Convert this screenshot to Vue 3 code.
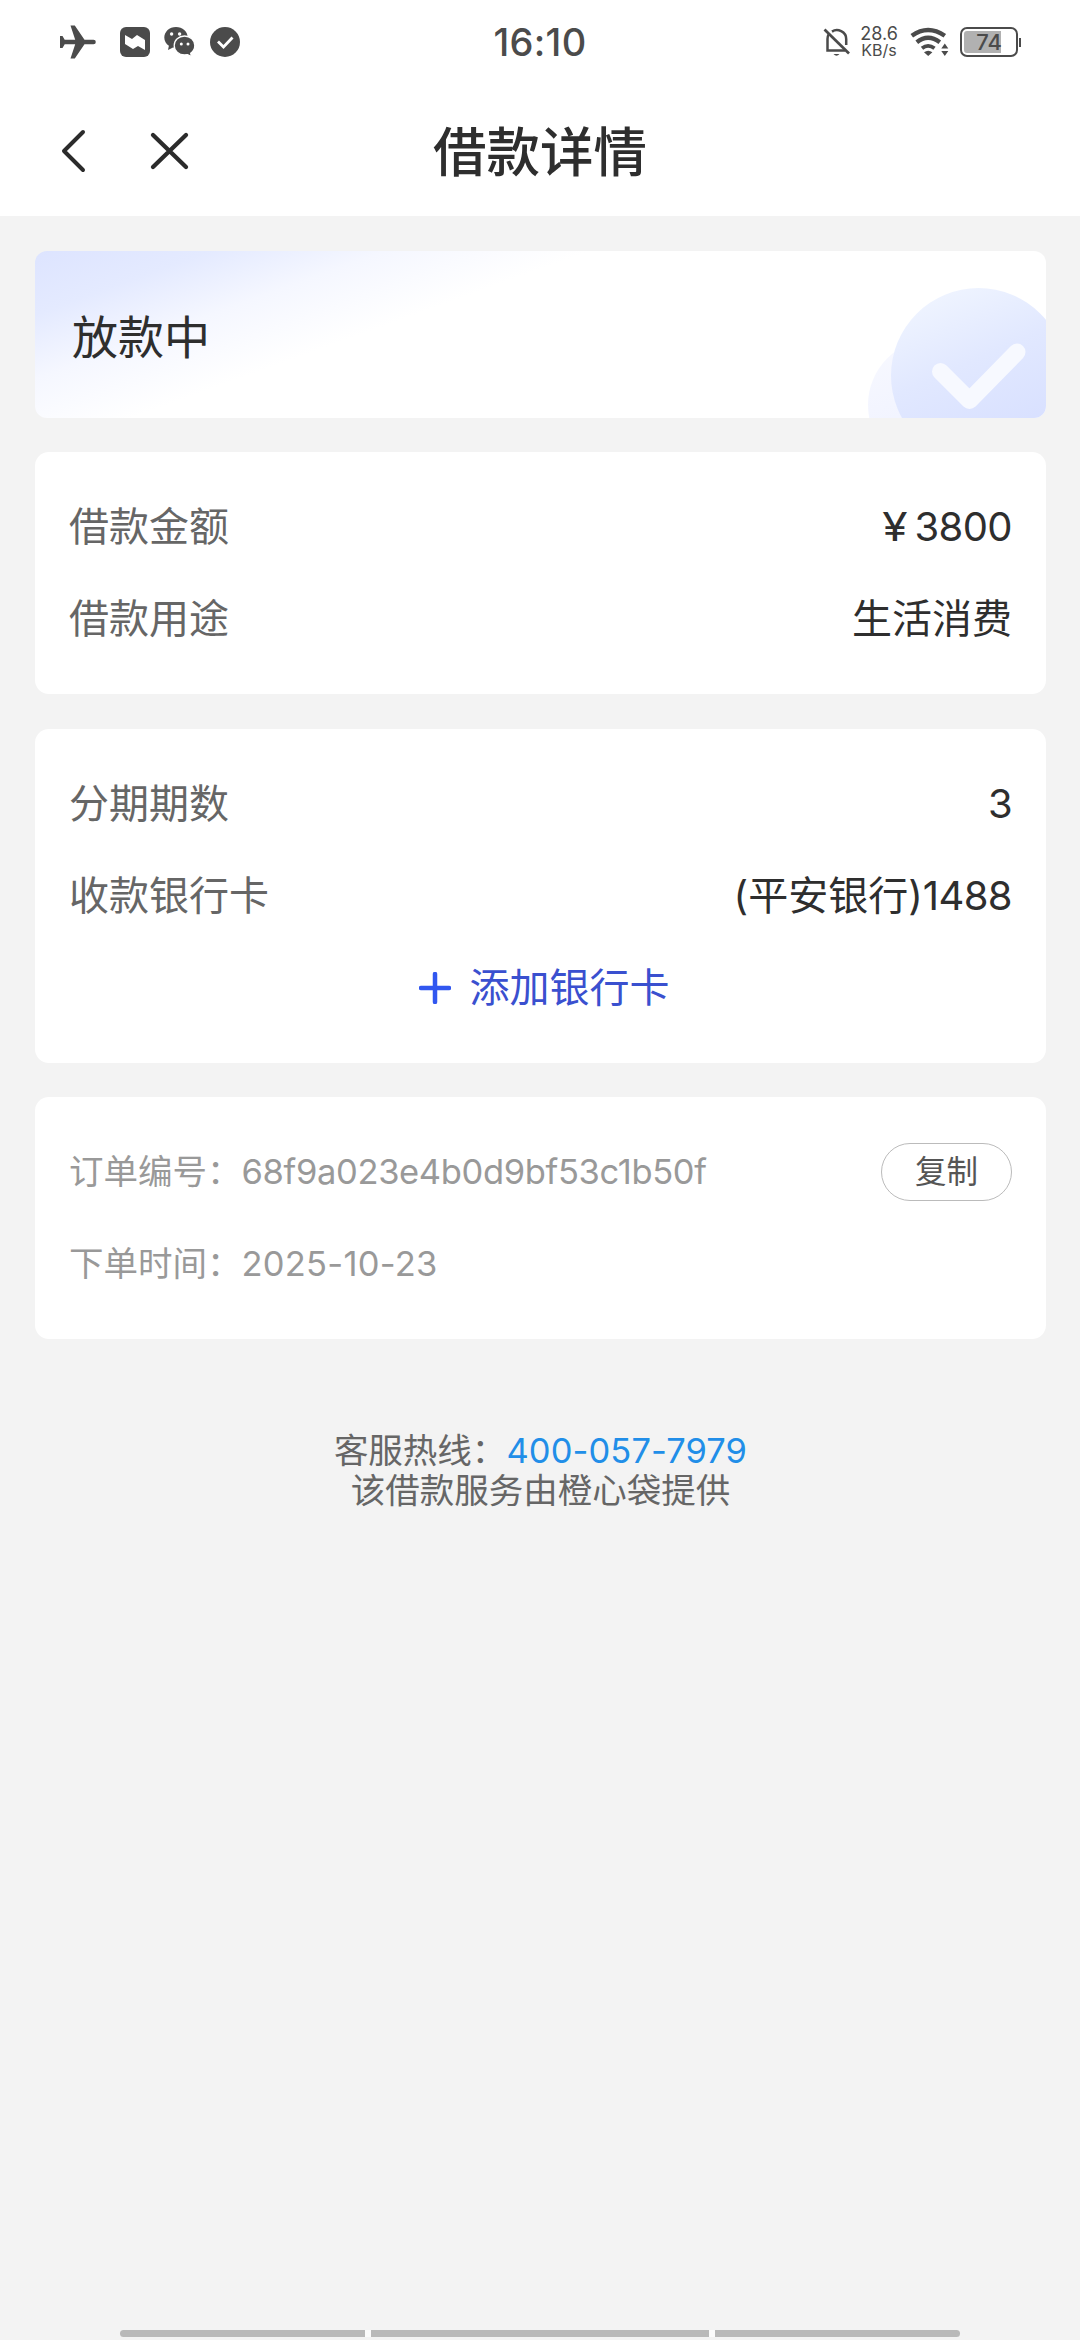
<script setup>
const loan = [
  { label: '借款金额', value: '3800', yen: true },
  { label: '借款用途', value: '生活消费' },
]
const plan = [
  { label: '分期期数', value: '3' },
  { label: '收款银行卡', bank: '(平安银行)', value: '1488' },
]
</script>

<template>
  <div class="page">
    <header class="top">
      <div class="status">
        <div class="status-left">
          <svg class="plane" width="38" height="36" viewBox="0 0 38 36">
            <path d="M1 12h2.500l2.200 3.700h10.500L11.500 1.500h4.300L25.500 15.700H34.500a2.300 2.300 0 0 1 0 4.600H25.500L15.800 34.500h-4.300l4.700-14.200H5.700L3.500 24H1z" fill="#4b4b4b" />
          </svg>
          <svg class="app" width="30" height="30" viewBox="0 0 30 30">
            <rect width="30" height="30" rx="6" fill="#4b4b4b" />
            <path d="M5 8l7 4 5-4 8 5v10l-7-4-5 3-8-5z" fill="#fff" />
          </svg>
          <svg class="wechat" width="32" height="30" viewBox="0 0 32 30">
            <path d="M12 0C5.300 0 .3 4.700.3 10.500c0 3.500 1.800 6.300 4.600 8.300L4 23l5-2.500 3 .5c6.500 0 11.700-4.500 11.700-10.500S18.500 0 12 0z" fill="#4b4b4b" />
            <circle cx="7.600" cy="7" r="1.700" fill="#fff" /><circle cx="15.600" cy="7" r="1.700" fill="#fff" />
            <path d="M20.500 9C14.700 9 10.200 13 10.200 18.500S14.700 28 20.500 28l3-.4 4 2.100-.8-3.500c2.500-1.800 4.100-4.500 4.100-7.700C30.800 13 26.300 9 20.500 9z" fill="#4b4b4b" stroke="#fff" stroke-width="1.300" />
            <circle cx="17.300" cy="17" r="1.500" fill="#fff" /><circle cx="24" cy="17" r="1.500" fill="#fff" />
          </svg>
          <svg class="done" width="30" height="30" viewBox="0 0 30 30">
            <circle cx="15" cy="15" r="15" fill="#4b4b4b" />
            <path d="M8 14.500l5.500 5.500L22.500 10.500" fill="none" stroke="#fff" stroke-width="2.800" />
          </svg>
        </div>
        <div class="clock">16:10</div>
        <div class="status-right">
          <svg width="28" height="30" viewBox="0 0 28 30" fill="none" stroke="#4b4b4b">
            <path d="M5.500 7.500Q4.500 9.500 4.500 12v11.500H22" stroke-width="2.500" />
            <path d="M9 4.600C14.500 1 23.200 4.600 23.200 12v6" stroke-width="2.500" />
            <path d="M1.500 2.500l24.500 24" stroke-width="2.700" />
            <path d="M10.500 27h6q-3 3.500-6 0z" fill="#4b4b4b" stroke="none" />
          </svg>
          <div class="speed"><span>28.6</span><span class="unit">KB/s</span></div>
          <svg class="wifi" width="40" height="30" viewBox="0 0 40 30">
            <g fill="none" stroke="#4b4b4b" stroke-width="4.400">
              <path d="M1.800 8.800Q18 -2.800 34.800 8.800" />
              <path d="M6.800 15.200Q18 6.300 29.800 15.200" />
              <path d="M12 21.300Q18 16.500 24.500 21.300" stroke-width="3.800" />
            </g>
            <path d="M14 25.200q4.200-3 8.400 0L18.200 29z" fill="#4b4b4b" />
            <path d="M31.300 21.500h7L34.800 16.500zM31.300 24h7L34.800 29z" fill="#4b4b4b" />
          </svg>
          <div class="battery"><div class="cell"><div class="charge"></div><span>74</span></div><i></i></div>
        </div>
      </div>
      <div class="nav">
        <svg width="130" height="44" viewBox="0 0 130 44" fill="none" stroke="#2b2b2b" stroke-linecap="round" stroke-linejoin="round">
          <path d="M23 3L4 22 23 41" stroke-width="4" />
          <path d="M93 6l33 32M126 6L93 38" stroke-width="4.300" />
        </svg>
        <h1>借款详情</h1>
      </div>
    </header>

    <main>
      <section class="banner">
        <span>放款中</span>
        <svg width="180" height="167" viewBox="0 0 180 167">
          <defs>
            <linearGradient id="disc" x1=".2" y1=".05" x2=".6" y2=".95">
              <stop offset="0" stop-color="#eff4ff" /><stop offset=".45" stop-color="#e1e8ff" /><stop offset="1" stop-color="#d7dfff" />
            </linearGradient>
            <linearGradient id="halo" x1="0" y1="0" x2=".3" y2="1">
              <stop offset="0" stop-color="#f8f9ff" /><stop offset="1" stop-color="#eef1ff" />
            </linearGradient>
          </defs>
          <circle cx="68" cy="154" r="66" fill="url(#halo)" />
          <circle cx="112.500" cy="124.500" r="87.500" fill="url(#disc)" />
          <path d="M74.500 120.500l29 29 47.500-48.500" fill="none" stroke="#f7f9ff" stroke-width="17" stroke-linecap="round" stroke-linejoin="round" />
        </svg>
      </section>

      <section class="card">
        <div v-for="r in loan" :key="r.label" class="row">
          <span class="label">{{ r.label }}</span>
          <span class="value"><span v-if="r.yen" class="yen">¥</span><span :class="{ num: r.yen }">{{ r.value }}</span></span>
        </div>
      </section>

      <section class="card">
        <div v-for="r in plan" :key="r.label" class="row">
          <span class="label">{{ r.label }}</span>
          <span class="value">{{ r.bank }}<span class="num">{{ r.value }}</span></span>
        </div>
        <div class="row add">
          <svg width="32" height="32" viewBox="0 0 32 32" stroke="#3157f0" stroke-width="4.500" stroke-linecap="round">
            <path d="M2 16h28M16 2v28" />
          </svg>
          <span>添加银行卡</span>
        </div>
      </section>

      <section class="card order">
        <div class="row">
          <span>订单编号：<span class="id">68f9a023e4b0d9bf53c1b50f</span></span>
          <button>复制</button>
        </div>
        <div class="row"><span>下单时间：<span class="date">2025-10-23</span></span></div>
      </section>

      <footer>
        <p>客服热线：<a>400-057-7979</a></p>
        <p>该借款服务由橙心袋提供</p>
      </footer>
    </main>

    <div class="gesture"><i></i><i class="wide"></i><i></i></div>
  </div>
</template>

<style>
body { background: #f3f3f3; }
</style>

<style scoped>
.page {
  width: 1080px;
  height: 2340px;
  display: flex;
  flex-direction: column;
  background: #f3f3f3;
  color: #2e2e2e;
  font-family: Inter, "Noto Sans CJK SC", sans-serif;
  font-size: 40px;
  overflow: hidden;
}
.top { height: 216px; background: #fff; }
.status {
  height: 84px;
  display: grid;
  grid-template-columns: 1fr auto 1fr;
  align-items: center;
  color: #4b4b4b;
}
.status svg { display: block; flex: none; }
.status-left { display: flex; align-items: center; padding-left: 59px; }
.app { margin-left: 23px; }
.wechat { margin-left: 14px; }
.done { margin-left: 14px; }
.clock { font-size: 38px; font-weight: 500; line-height: 84px; letter-spacing: 0.3px; }
.status-right { display: flex; align-items: center; justify-content: flex-end; padding-right: 59px; }
.speed {
  display: flex;
  flex-direction: column;
  align-items: center;
  width: 40px;
  margin-left: 8px;
  font-size: 18px;
  line-height: 17px;
}
.unit { font-size: 16px; }
.wifi { margin-left: 11px; }
.battery { display: flex; align-items: center; margin-left: 10px; }
.battery i { width: 2px; height: 9px; background: #4b4b4b; margin-left: 1px; }
.cell {
  position: relative;
  box-sizing: border-box;
  width: 58px;
  height: 30px;
  border: 2.5px solid #4b4b4b;
  border-radius: 7px;
  padding: 2px;
  display: flex;
}
.charge { width: 37px; background: #b1b1b1; border-radius: 3px 0 0 3px; }
.cell span {
  position: absolute;
  inset: 0;
  text-align: center;
  font-size: 22px;
  line-height: 27px;
  font-weight: 500;
}
.nav { position: relative; height: 132px; display: flex; align-items: center; }
.nav svg { margin-left: 60px; margin-top: 2px; }
.nav h1 {
  position: absolute;
  inset: 0;
  margin: 0;
  text-align: center;
  font-size: 53.5px;
  font-weight: 500;
  line-height: 138px;
}
main { display: flex; flex-direction: column; gap: 35px; padding: 35px 34px 0 35px; }
.banner {
  height: 167px;
  box-sizing: border-box;
  border-radius: 12px;
  overflow: hidden;
  padding-left: 37px;
  display: flex;
  align-items: center;
  justify-content: space-between;
  font-size: 46px;
  background: linear-gradient(160deg, #dde4ff 0, #e4eaff 60px, #f5f7ff 120px, #fff 190px);
}
.banner span { line-height: 60px; margin-top: 4px; }
.banner svg { display: block; }
.card { background: #fff; border-radius: 14px; padding: 29px 34px 29px 34px; }
.banner + .card { margin-top: -1px; }
.order { margin-top: -1px; }
.row { height: 92px; display: flex; align-items: center; justify-content: space-between; line-height: 60px; }
.label { color: #666; }
.value { color: #2e2e2e; }
.num { letter-spacing: -0.6px; }
.yen { display: inline-block; transform: scaleX(1.15); margin-right: 8px; }
.add { justify-content: center; gap: 19px; padding-left: 7px; color: #3a50cf; }
.order { color: #999; font-size: 34.5px; }
.id { letter-spacing: -0.35px; }
.date { letter-spacing: 0.25px; }
button {
  width: 131px;
  height: 58px;
  box-sizing: border-box;
  border: 1.5px solid #bbb;
  border-radius: 30px;
  background: #fff;
  color: #555;
  font: inherit;
  font-size: 31.5px;
  line-height: 54px;
  padding: 0;
}
footer { margin-top: 57px; text-align: center; font-size: 34.5px; line-height: 40px; color: #666; }
footer p { margin: 0; }
footer a { color: #218ee8; letter-spacing: 0.1px; }
.gesture { margin-top: auto; height: 10px; display: flex; justify-content: center; gap: 6px; background: linear-gradient(#fbfbfb, #fbfbfb) center top / 590px 7px no-repeat; }
.gesture i { width: 245px; height: 7px; background: #b9b9b9; border-radius: 4px 0 0 4px; }
.gesture .wide { width: 338px; border-radius: 0; }
.gesture i:last-child { border-radius: 0 4px 4px 0; }
</style>
